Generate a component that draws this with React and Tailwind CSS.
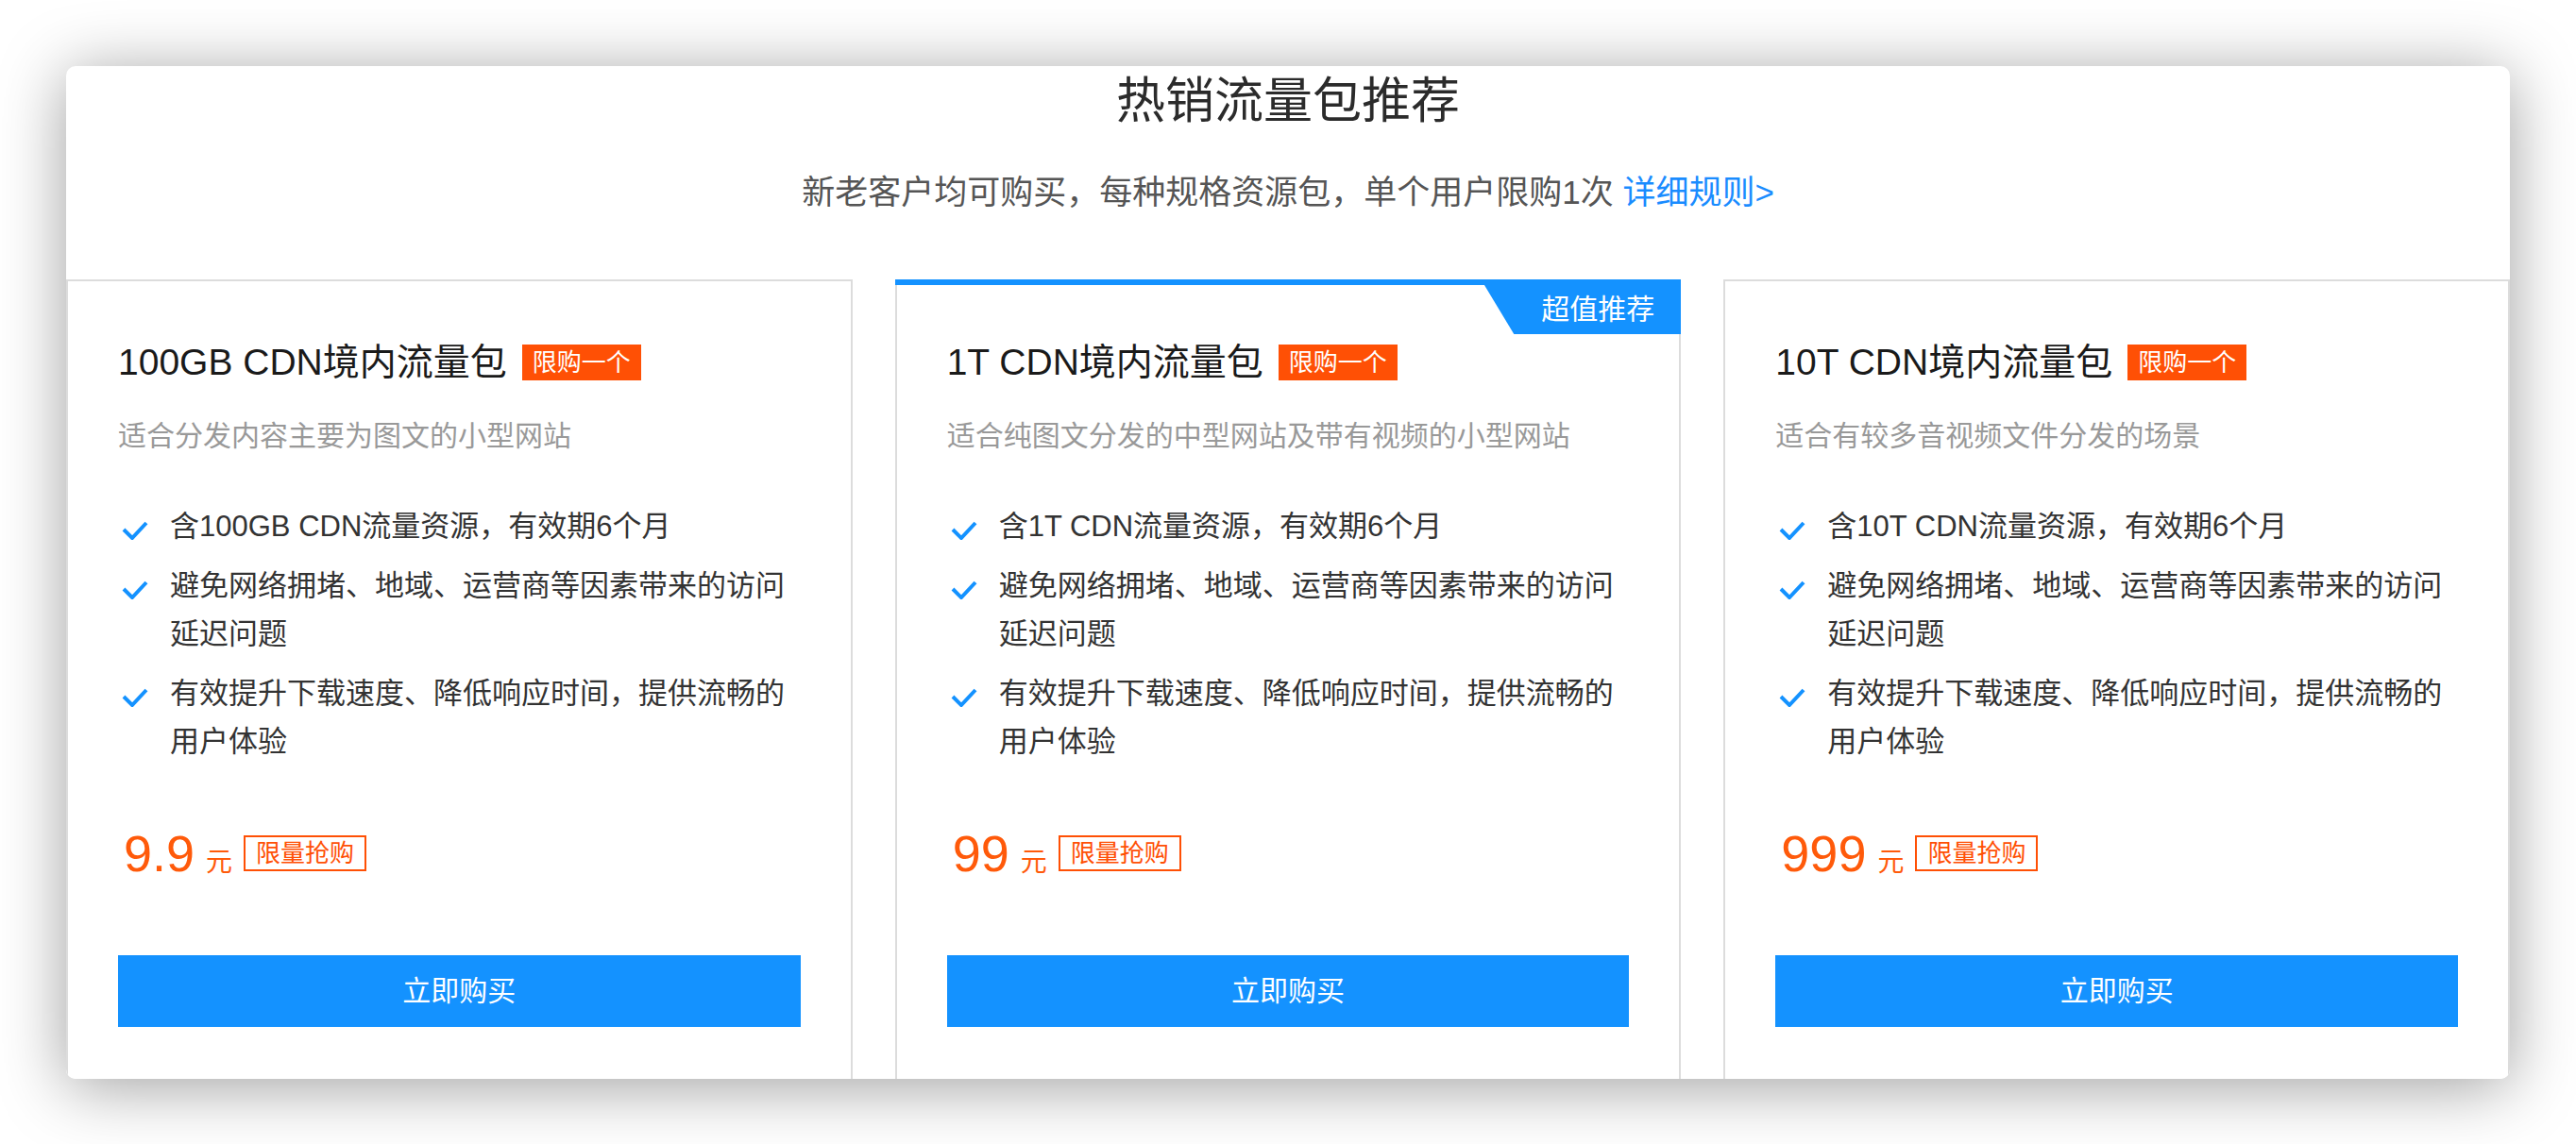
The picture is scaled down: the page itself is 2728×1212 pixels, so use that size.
const FONT = { fontFamily: '"Liberation Sans", "Noto Sans CJK SC", sans-serif' }

const PLANS = [
  {
    key: '100g',
    title: '100GB CDN境内流量包',
    desc: '适合分发内容主要为图文的小型网站',
    size: '100GB',
    price: '9.9',
  },
  {
    key: '1t',
    title: '1T CDN境内流量包',
    desc: '适合纯图文分发的中型网站及带有视频的小型网站',
    size: '1T',
    price: '99',
    hot: true,
  },
  {
    key: '10t',
    title: '10T CDN境内流量包',
    desc: '适合有较多音视频文件分发的场景',
    size: '10T',
    price: '999',
  },
]

function Check() {
  return (
    <svg viewBox="0 0 28 20" className="ml-[4px] mt-[20px] h-[20px] w-[28px]" fill="none">
      <polyline
        points="2,9 11,18 26,2"
        stroke="#1492ff"
        strokeWidth="4"
        strokeLinecap="butt"
        strokeLinejoin="miter"
      />
    </svg>
  )
}

function Feature({ children }) {
  return (
    <li className="flex">
      <span className="w-[55px] shrink-0">
        <Check />
      </span>
      <span className="text-[31px] leading-[51px] text-[#333]">{children}</span>
    </li>
  )
}

function PlanCard({ plan }) {
  return (
    <div className="relative flex flex-col border-2 border-b-0 border-[#dcdcdc] bg-white px-[53px] pt-[63px] pb-[55px]">
      {plan.hot && (
        <>
          <span className="absolute -left-[2px] -right-[2px] -top-[2px] h-[6px] bg-[#1492ff]" />
          <span className="absolute -right-[2px] -top-[2px] flex h-[58px] w-[212px] items-center justify-end bg-[#1492ff] pr-[28px] pt-[6px] text-[30px] leading-none text-white [clip-path:polygon(0_0,100%_0,100%_100%,16.5%_100%)]">
            超值推荐
          </span>
        </>
      )}

      <div className="flex items-center gap-[16px]">
        <h3 className="text-[39px] font-normal leading-[46px] text-[#1a1a1a]">{plan.title}</h3>
        <span className="flex h-[38px] items-center bg-[#ff5005] px-[11px] text-[26px] leading-none text-white">
          限购一个
        </span>
      </div>

      <p className="mt-[37px] text-[30px] leading-[36px] text-[#999]">{plan.desc}</p>

      <ul className="mt-[52px] flex flex-col gap-[12px]">
        <Feature>含{plan.size} CDN流量资源，有效期6个月</Feature>
        <Feature>避免网络拥堵、地域、运营商等因素带来的访问延迟问题</Feature>
        <Feature>有效提升下载速度、降低响应时间，提供流畅的用户体验</Feature>
      </ul>

      <div className="mt-[66px] flex items-center gap-[12px]">
        <span className="flex items-baseline text-[#ff5a0a]">
          <span className="pl-[6px] text-[54px] leading-[54px]">{plan.price}</span>
          <span className="ml-[12px] text-[28px] leading-none">元</span>
        </span>
        <span className="flex h-[38px] items-center border-2 border-[#ff5005] px-[11px] text-[26px] leading-none text-[#ff5005]">
          限量抢购
        </span>
      </div>

      <button className="mt-auto h-[76px] w-full bg-[#1492ff] text-[30px] leading-none text-white">
        立即购买
      </button>
    </div>
  )
}

export default function App() {
  return (
    <div className="flex h-[1212px] w-full justify-center bg-white pt-[70px]" style={FONT}>
      <div className="flex h-[1073px] w-[2588px] flex-col overflow-hidden rounded-[10px] bg-white shadow-[0_8px_70px_rgba(0,0,0,0.38)]">
        <header className="flex h-[226px] flex-col items-center pt-[11px]">
          <h1 className="text-[52px] font-normal leading-[52px] text-[#2b2b2b]">热销流量包推荐</h1>
          <p className="mt-[53px] text-[35px] leading-[35px] text-[#555]">
            新老客户均可购买，每种规格资源包，单个用户限购1次{' '}
            <a className="text-[#1a8cff]">详细规则&gt;</a>
          </p>
        </header>

        <div className="grid flex-1 grid-cols-3 gap-x-[45px]">
          {PLANS.map((p) => (
            <PlanCard key={p.key} plan={p} />
          ))}
        </div>
      </div>
    </div>
  )
}
